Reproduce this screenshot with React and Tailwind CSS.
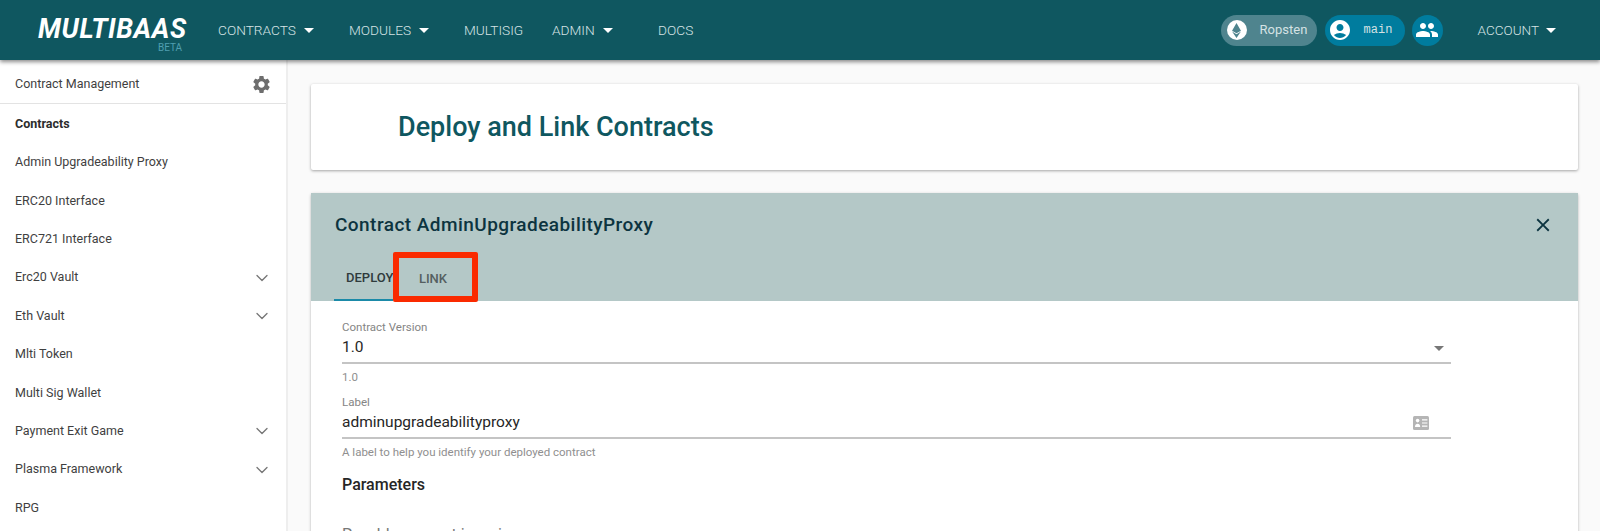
import React from 'react';
import { ChevronDown } from 'lucide-react';
import { MdSettings, MdAccountCircle, MdPeople, MdArrowDropDown, MdClose } from 'react-icons/md';
import { FaEthereum } from 'react-icons/fa';

const navItems = [
  { label: 'CONTRACTS', caret: true, w: 'w-[131px]' },
  { label: 'MODULES', caret: true, w: 'w-[115px]' },
  { label: 'MULTISIG', w: 'w-[88px]' },
  { label: 'ADMIN', caret: true, w: 'w-[106px]' },
  { label: 'DOCS', w: 'w-[60px]' },
];

const sideItems = [
  { label: 'Contracts', bold: true },
  { label: 'Admin Upgradeability Proxy' },
  { label: 'ERC20 Interface' },
  { label: 'ERC721 Interface' },
  { label: 'Erc20 Vault', more: true },
  { label: 'Eth Vault', more: true },
  { label: 'Mlti Token' },
  { label: 'Multi Sig Wallet' },
  { label: 'Payment Exit Game', more: true },
  { label: 'Plasma Framework', more: true },
  { label: 'RPG' },
];

const ContactIcon = () => (
  <svg viewBox="0 0 16 14" className="h-[14px] w-4 text-[#b5b5b5]">
    <rect width="16" height="14" rx="1.5" fill="currentColor" />
    <circle cx="4.6" cy="4.6" r="1.8" fill="#fff" />
    <path d="M2 11c0-2 1.2-3.2 2.6-3.2S7.2 9 7.2 11z" fill="#fff" />
    <path d="M9 3.2h5.4v1.2H9zM9 6.4h5.4v1.2H9zM9 9.6h5.4v1.2H9z" fill="#fff" />
  </svg>
);

const Header = () => (
  <header className="relative z-10 flex h-[60px] shrink-0 items-center bg-[#0f5760] pl-[38px] pr-[37px] shadow-[0_2px_4px_rgba(0,0,0,0.45)]">
    <div className="relative mb-[3px] w-[180px] shrink-0">
      <div className="text-[27px] leading-[30px] font-bold italic tracking-[0.6px] text-white">MULTIBAAS</div>
      <div className="absolute top-[28px] left-[120px] text-[10px] leading-[12px] text-[#4f9fb0]">BETA</div>
    </div>
    <nav className="flex items-center text-[13.7px] font-light text-[#d5e2e4]">
      {navItems.map((item) => (
        <div key={item.label} className={`flex items-center ${item.w}`}>
          <span>{item.label}</span>
          {item.caret && <MdArrowDropDown className="ml-[1px] h-6 w-6 text-white" />}
        </div>
      ))}
    </nav>
    <div className="ml-auto flex items-center">
      <div className="flex h-[31px] w-[96px] items-center rounded-full bg-[#4f848e] pl-[6px] text-[13px] text-[#d5e2e4]">
        <span className="flex h-5 w-5 items-center justify-center rounded-full bg-white">
          <FaEthereum className="h-[15px] w-[15px] text-[#4f848e]" />
        </span>
        <span className="ml-[13px]">Ropsten</span>
      </div>
      <div className="ml-2 flex h-[31px] w-[80px] items-center rounded-full bg-[#007c9e] pl-[3px] font-['Liberation_Mono',monospace] text-[12px] text-[#d5e2e4]">
        <MdAccountCircle className="h-6 w-6 text-white" />
        <span className="ml-3">main</span>
      </div>
      <div className="ml-[7px] flex h-[31px] w-[31px] items-center justify-center rounded-full bg-[#007c9e]">
        <MdPeople className="h-6 w-6 text-white" />
      </div>
      <div className="ml-[35px] flex items-center text-[13.5px] font-light text-[#d5e2e4]">
        <span>ACCOUNT</span>
        <MdArrowDropDown className="h-6 w-6 text-white" />
      </div>
    </div>
  </header>
);

const Sidebar = () => (
  <aside className="w-[288px] shrink-0 border-r-2 border-[#eeeeee] bg-white text-[12.5px] text-[#3f3f3f]">
    <div className="flex h-[44px] items-center justify-between border-b border-[#e3e3e3] pt-[6px] pl-[15px] pr-[14px]">
      <span>Contract Management</span>
      <MdSettings className="h-[21px] w-[21px] text-[#6e6e6e]" />
    </div>
    <ul className="pt-[1px]">
      {sideItems.map((item) => (
        <li key={item.label} className="flex h-[38.4px] items-center justify-between pl-[15px] pr-[14px]">
          <span className={item.bold ? 'font-bold text-[#2c2c2c]' : ''}>{item.label}</span>
          {item.more && <ChevronDown className="h-5 w-5 text-[#777777]" strokeWidth={1.6} />}
        </li>
      ))}
    </ul>
  </aside>
);

const Field = ({ label, value, help, icon }) => (
  <div>
    <div className="text-[11.5px] leading-[14px] text-[#858585]">{label}</div>
    <div className="flex h-[30px] items-center justify-between border-b-2 border-[#c4c4c4] pb-[1px] text-[15.5px] text-[#262626]">
      <span>{value}</span>
      {icon}
    </div>
    <div className="mt-[6px] text-[11.5px] leading-[14px] text-[#8f8f8f]">{help}</div>
  </div>
);

export default function App() {
  return (
    <div className="flex h-[531px] flex-col overflow-hidden bg-[#fafafa] font-['Roboto',sans-serif]">
      <Header />
      <div className="flex min-h-0 flex-1">
        <Sidebar />
        <main className="min-w-0 flex-1 pt-6 pl-[23px] pr-[22px]">
          <div className="flex h-[86px] items-center rounded-[2px] bg-white pl-[87px] shadow-[0_1px_3px_rgba(0,0,0,0.35)]">
            <h1 className="text-[27px] font-medium text-[#0f5760]">Deploy and Link Contracts</h1>
          </div>
          <section className="mt-[23px] rounded-[2px] bg-white shadow-[0_1px_3px_rgba(0,0,0,0.3)]">
            <div className="h-[108px] bg-[#b4c8c7]">
              <div className="flex h-[64px] items-center justify-between pl-[24px] pr-[24px]">
                <h2 className="text-[19px] font-medium tracking-[0.45px] text-[#0c3440]">Contract AdminUpgradeabilityProxy</h2>
                <MdClose className="h-[22px] w-[22px] text-[#0c3440]" />
              </div>
              <div className="relative ml-[23px] flex h-[44px] text-[13px] font-medium">
                <div className="flex w-[59px] items-center overflow-hidden border-b-2 border-[#1b8aa8] pl-[12px] text-[#2f3a3c]">
                  <span className="whitespace-nowrap">DEPLOY</span>
                </div>
                <div className="flex w-[80px] items-center justify-center text-[#555f60]">LINK</div>
                <div className="absolute top-[-5px] left-[59px] h-[50px] w-[85px] rounded-[2px] border-[6px] border-[#fa2a00]" />
              </div>
            </div>
            <div className="pt-[19px] pr-[127px] pl-[31px]">
              <Field
                label="Contract Version"
                value="1.0"
                help="1.0"
                icon={<MdArrowDropDown className="h-6 w-6 text-[#777777]" />}
              />
              <div className="mt-[11px]">
                <Field
                  label="Label"
                  value="adminupgradeabilityproxy"
                  help="A label to help you identify your deployed contract"
                  icon={<span className="mr-[22px] flex"><ContactIcon /></span>}
                />
              </div>
              <h3 className="mt-[14px] text-[16px] leading-6 font-medium text-[#262626]">Parameters</h3>
              <div className="mt-[26px] text-[16px] leading-6 text-[#777777]">Payable amount in wei</div>
            </div>
          </section>
        </main>
      </div>
    </div>
  );
}
